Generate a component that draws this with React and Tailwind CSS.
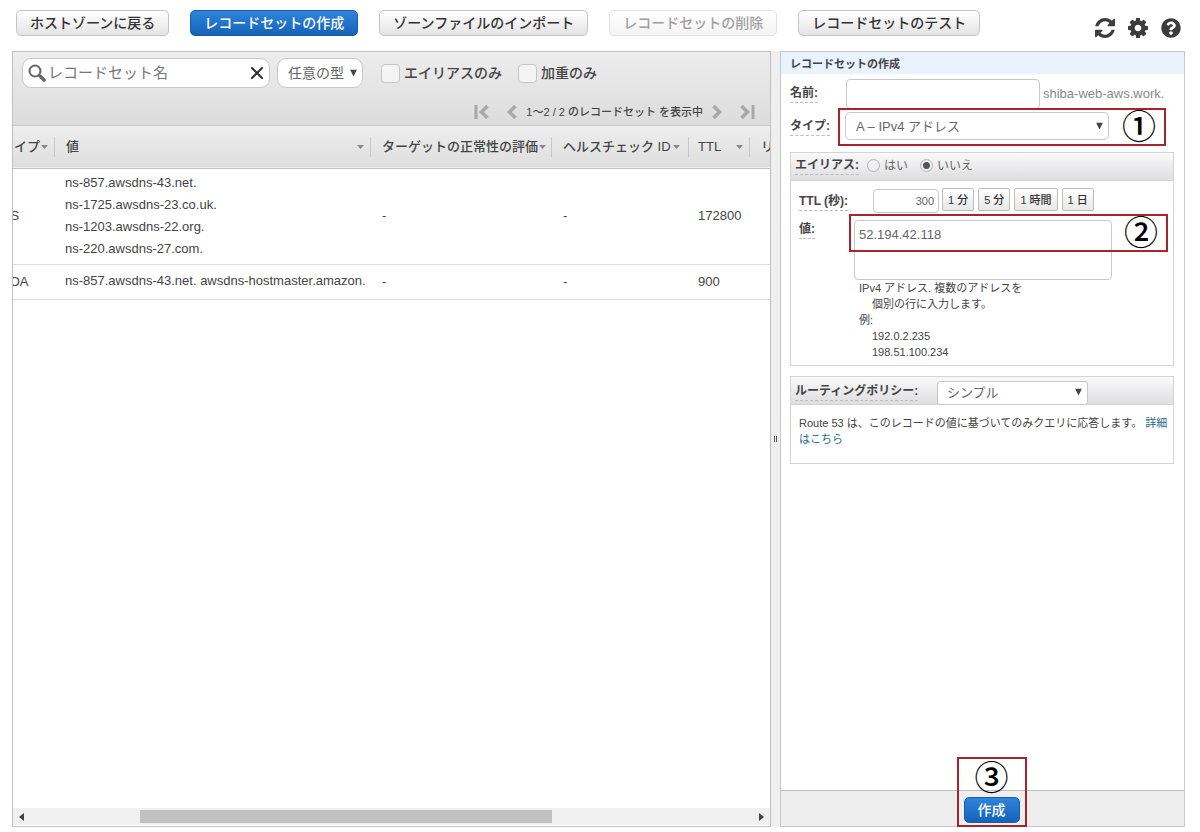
import { useState } from 'react';
import { X } from 'lucide-react';
import { FaQuestionCircle } from 'react-icons/fa';

const COLUMNS = [
  { label: 'タイプ',                   width: 'w-[62px]',  pad: 'pl-2 pr-[6px]' },
  { label: '値',                       width: '',          pad: 'pl-[11px] pr-[6px]' },
  { label: 'ターゲットの正常性の評価', width: 'w-[181px]', pad: 'pl-[11px] pr-[5px]' },
  { label: 'ヘルスチェック ID',        width: 'w-[137px]', pad: 'pl-[11px] pr-2' },
  { label: 'TTL',                      width: 'w-[61px]',  pad: 'pl-[9px] pr-[6px]' },
  { label: 'リージョン',               width: 'w-[100px]', pad: 'pl-[11px]' },
];

const RECORDS = [
  {
    type: 'NS',
    values: ['ns-857.awsdns-43.net.', 'ns-1725.awsdns-23.co.uk.', 'ns-1203.awsdns-22.org.', 'ns-220.awsdns-27.com.'],
    ttl: '172800',
  },
  { type: 'SOA', values: ['ns-857.awsdns-43.net. awsdns-hostmaster.amazon.'], ttl: '900' },
];

const TTL_PRESETS = [
  { label: '1 分',   seconds: '60' },
  { label: '5 分',   seconds: '300' },
  { label: '1 時間', seconds: '3600' },
  { label: '1 日',   seconds: '86400' },
];

const BUTTON_STYLES = {
  plain:    'border-[#c4c4c4] bg-linear-to-b from-white to-[#e4e4e4] text-[#333]',
  primary:  'border-[#1a5ca8] bg-linear-to-b from-[#2f84dc] to-[#1463b8] text-white font-bold',
  disabled: 'border-[#e2e2e2] bg-linear-to-b from-white to-[#f4f4f4] text-[#a0a0a0]',
};

function Button({ variant = 'plain', children, ...rest }) {
  return (
    <button disabled={variant === 'disabled'} className={`h-[26px] px-[13px] rounded-[5px] border text-[14px] leading-[22px] font-medium whitespace-nowrap ${BUTTON_STYLES[variant]}`} {...rest}>
      {children}
    </button>
  );
}

function RefreshIcon() {
  return (
    <svg viewBox="0 128 1536 1536" className="w-5 h-5" fill="currentColor">
      <path d="M1511 1056q0 5-1 7-64 268-268 434.500t-478 166.500q-146 0-282.500-55t-243.500-157l-129 129q-19 19-45 19t-45-19-19-45v-448q0-26 19-45t45-19h448q26 0 45 19t19 45-19 45l-137 137q71 66 161 102t187 36q134 0 250-65t186-179q11-17 53-117 8-23 30-23h192q13 0 22.500 9.500t9.500 22.500zm25-800v448q0 26-19 45t-45 19h-448q-26 0-45-19t-19-45 19-45l138-138q-148-137-349-137-134 0-250 65t-186 179q-11 17-53 117-8 23-30 23h-199q-13 0-22.500-9.500t-9.500-22.500v-7q65-268 270-434.500t480-166.500q146 0 284 55.500t245 156.500l130-129q19-19 45-19t45 19 19 45z" />
    </svg>
  );
}

function GearIcon() {
  return (
    <svg viewBox="0 128 1536 1536" className="w-5 h-5" fill="currentColor">
      <path d="M1024 896q0-106-75-181t-181-75-181 75-75 181 75 181 181 75 181-75 75-181zm512-109v222q0 12-8 23t-20 13l-185 28q-19 54-39 91 35 50 107 138 10 12 10 25t-9 23q-27 37-99 108t-94 71q-12 0-26-9l-138-108q-44 23-91 38-16 136-29 186-7 28-36 28h-222q-14 0-24.500-8.500t-11.500-21.500l-28-184q-49-16-90-37l-141 107q-10 9-25 9-14 0-25-11-126-114-165-168-7-10-7-23 0-12 8-23 15-21 51-66.500t54-70.500q-27-50-41-99l-183-27q-13-2-21-12.500t-8-23.500v-222q0-12 8-23t19-13l186-28q14-46 39-92-40-57-107-138-10-12-10-24 0-10 9-23 26-36 98.500-107.500t94.500-71.500q13 0 26 10l138 107q44-23 91-38 16-136 29-186 7-28 36-28h222q14 0 24.500 8.500t11.500 21.500l28 184q49 16 90 37l142-107q9-9 24-9 13 0 25 10 129 119 165 170 7 8 7 22 0 12-8 23-15 21-51 66.500t-54 70.500q26 50 41 98l183 28q13 2 21 12.500t8 23.500z" />
    </svg>
  );
}

function SearchIcon() {
  return (
    <svg viewBox="0 0 18 18" className="w-[18px] h-[18px] shrink-0" fill="none" stroke="#666" strokeLinecap="round">
      <circle cx="7" cy="7" r="5.500" strokeWidth="2" />
      <path d="M12 12l4 4" strokeWidth="3.500" />
    </svg>
  );
}

function Chevron({ flip, bar }) {
  return (
    <svg viewBox="0 0 16 14" className={`w-4 h-[14px] ${flip ? '-scale-x-100' : ''}`} fill="none" stroke="#a8a8a8">
      {bar && <path d="M2 0V14" strokeWidth="3" />}
      <path d="M13.500 1 7.500 7l6 6" strokeWidth="3.500" />
    </svg>
  );
}

function SelectBox({ className, textClass, children, ...rest }) {
  return (
    <div className={`relative ${className}`}>
      <select className={`w-full h-full appearance-none border border-[#c8c8c8] bg-white text-[#666] ${textClass}`} {...rest}>
        {children}
      </select>
      <svg viewBox="0 0 7 7" className="absolute right-[6px] top-1/2 -translate-y-1/2 w-[7px] h-[7px] pointer-events-none" fill="#444">
        <path d="M0 0H7L3.500 7Z" />
      </svg>
    </div>
  );
}

function FieldLabel({ children, ...rest }) {
  return (
    <label className="border-b border-dashed border-[#bbb] text-[12px] leading-[17px] font-bold text-[#444] whitespace-nowrap" {...rest}>
      {children}
    </label>
  );
}

// Numbered red frame laid over the control that a step is about
function Step({ number, className }) {
  return (
    <div className={`absolute z-10 flex border-2 border-[#a8242a] pointer-events-none ${className}`}>
      <span className="text-[34px] leading-[34px] font-medium text-black">{number}</span>
    </div>
  );
}

function RecordTable() {
  return (
    <div className="overflow-hidden">
      <table className="-ml-5 w-[calc(100%+100px)] table-fixed border-collapse text-[13px] text-[#444]">
        <thead>
          <tr className="h-[42px] bg-linear-to-b from-[#eeeeee] to-[#dedede] border-b border-[#c4c4c4]">
            {COLUMNS.map(c => (
              <th key={c.label} className={`${c.width} p-0 text-left font-medium leading-[20px]`}>
                <div className={`flex items-center justify-between h-5 border-r border-[#c8c8c8] whitespace-nowrap ${c.pad}`}>
                  {c.label}
                  <svg viewBox="0 0 7 4" className="w-[7px] h-1 shrink-0" fill="#8a8a8a"><path d="M0 0H7L3.500 4Z" /></svg>
                </div>
              </th>
            ))}
          </tr>
        </thead>
        <tbody>
          {RECORDS.map(r => (
            <tr key={r.type} className="h-[35px] border-b border-[#dcdcdc] leading-[22px]">
              <td className="pl-2">{r.type}</td>
              <td className="pl-[10px] pt-[3px] pb-1 whitespace-nowrap">
                {r.values.map(v => <div key={v}>{v}</div>)}
              </td>
              <td className="pl-[11px]">-</td>
              <td className="pl-[11px]">-</td>
              <td className="pl-[9px]">{r.ttl}</td>
              <td />
            </tr>
          ))}
        </tbody>
      </table>
    </div>
  );
}

function RecordList() {
  const [query, setQuery] = useState('');

  return (
    <section className="flex-1 min-w-0 flex flex-col border border-[#c0c0c0]">
      <div className="h-[74px] shrink-0 bg-linear-to-b from-[#ededed] to-[#dcdcdc] border-b border-[#cacaca] pt-[6px]">
        <div className="flex items-center pl-[9px]">
          <div className="flex items-center w-[248px] h-[30px] pl-[5px] pr-[2px] rounded-[9px] border border-[#c8c8c8] bg-white">
            <SearchIcon />
            <input value={query} onChange={e => setQuery(e.target.value)} aria-label="レコードセット名" placeholder="レコードセット名"
              className="flex-1 min-w-0 pl-[2px] text-[15px] leading-[22px] text-[#555] placeholder:text-[#777] focus:outline-none" />
            <button onClick={() => setQuery('')} aria-label="クリア" className="shrink-0"><X className="w-5 h-5 text-[#333]" strokeWidth={2.5} /></button>
          </div>
          <SelectBox className="ml-[7px] w-[86px] h-[30px]" textClass="pl-[10px] rounded-[9px] text-[14px]" aria-label="型">
            <option>任意の型</option>
          </SelectBox>
          <input id="alias-only" type="checkbox" className="ml-[18px] w-[19px] h-[19px] appearance-none rounded-[4px] border border-[#c6c6c6] bg-[#f4f4f4] checked:bg-[#2f84dc]" />
          <label htmlFor="alias-only" className="ml-1 text-[14px] leading-[20px] font-medium text-[#444]">エイリアスのみ</label>
          <input id="weighted-only" type="checkbox" className="ml-4 w-[19px] h-[19px] appearance-none rounded-[4px] border border-[#c6c6c6] bg-[#f4f4f4] checked:bg-[#2f84dc]" />
          <label htmlFor="weighted-only" className="ml-1 text-[14px] leading-[20px] font-medium text-[#444]">加重のみ</label>
        </div>
        <div className="flex items-center justify-end h-5 mt-[14px] pr-[15px] text-[#444]">
          <button aria-label="最初"><Chevron bar /></button>
          <button aria-label="前へ" className="ml-3"><Chevron /></button>
          <span className="ml-2 mr-1 text-[11px] leading-[16px] font-medium whitespace-nowrap">1～2 / 2 のレコードセット を表示中</span>
          <button aria-label="次へ" className="ml-1"><Chevron flip /></button>
          <button aria-label="最後" className="ml-3"><Chevron flip bar /></button>
        </div>
      </div>

      <RecordTable />

      <div className="mt-auto flex items-center h-[17px] mb-px px-[6px] bg-[#f0f0f0]">
        <svg viewBox="0 0 5 8" className="w-[5px] h-2" fill="#404040"><path d="M5 0V8L0 4Z" /></svg>
        <div className="flex-1 mx-1 pl-[15%]">
          <div className="w-[67%] h-[13px] bg-[#c1c1c1]" />
        </div>
        <svg viewBox="0 0 5 8" className="w-[5px] h-2" fill="#404040"><path d="M0 0V8L5 4Z" /></svg>
      </div>
    </section>
  );
}

function CreateForm() {
  const [name, setName] = useState('');
  const [alias, setAlias] = useState('no');
  const [ttl, setTtl] = useState('300');
  const [value, setValue] = useState('52.194.42.118');

  const radio = 'w-[13px] h-[13px] appearance-none rounded-full border border-[#b4b4b4] bg-[#f0f0f0] checked:bg-[radial-gradient(circle,#555_3px,#f0f0f0_4px)]';

  return (
    <section className="w-[405px] shrink-0 flex flex-col border border-[#c8c8c8] text-[#444]">
      <h2 className="h-[22px] pl-[9px] bg-[#e9f2fd] text-[11px] leading-[24px] font-bold">レコードセットの作成</h2>

      <div className="pl-[9px] pr-[10px]">
        <div className="flex items-start h-[34px] pt-[5px]">
          <div className="w-[56px] pt-[6px] flex"><FieldLabel htmlFor="name">名前:</FieldLabel></div>
          <input id="name" value={name} onChange={e => setName(e.target.value)}
            className="w-[194px] h-[30px] px-2 rounded-[4px] border border-[#c8c8c8] text-[13px]" />
          <span className="ml-[3px] text-[13px] leading-[30px] text-[#888]">shiba-web-aws.work.</span>
        </div>
        <div className="relative flex items-start h-[44px] pt-1">
          <div className="w-[55px] pt-[6px] flex"><FieldLabel htmlFor="type">タイプ:</FieldLabel></div>
          <SelectBox id="type" className="w-[264px] h-[28px]" textClass="pl-[10px] pt-[2px] rounded-[5px] text-[13px]">
            <option>A – IPv4 アドレス</option>
          </SelectBox>
          <Step number="①" className="left-[48px] top-0 w-[328px] h-[38px] justify-end pr-2" />
        </div>

        <div className="border border-[#d4d4d4] h-[214px]">
          <div className="flex items-center h-[28px] pl-1 pb-[2px] bg-linear-to-b from-[#fafafa] to-[#dedee0] border-b border-[#d4d4d4] text-[12px]">
            <FieldLabel htmlFor="alias-no">エイリアス:</FieldLabel>
            <input id="alias-yes" name="alias" type="radio" checked={alias === 'yes'} onChange={() => setAlias('yes')} className={`ml-2 ${radio}`} />
            <label htmlFor="alias-yes" className="ml-1 leading-[20px] text-[#666]">はい</label>
            <input id="alias-no" name="alias" type="radio" checked={alias === 'no'} onChange={() => setAlias('no')} className={`ml-3 ${radio}`} />
            <label htmlFor="alias-no" className="ml-1 leading-[20px] text-[#666]">いいえ</label>
          </div>

          <div className="flex items-start pt-[7px] pl-2">
            <div className="w-[74px] pt-[5px] flex"><FieldLabel htmlFor="ttl">TTL (秒):</FieldLabel></div>
            <input id="ttl" value={ttl} onChange={e => setTtl(e.target.value)}
              className="w-[66px] h-6 mt-px pr-1 rounded-[4px] border border-[#c8c8c8] text-right text-[11px] text-[#666]" />
            <div className="ml-[3px] flex gap-1">
              {TTL_PRESETS.map(p => (
                <button key={p.label} onClick={() => setTtl(p.seconds)}
                  className="h-[23px] px-[5px] rounded-[2px] border border-[#bdbdbd] bg-linear-to-b from-white to-[#e8e8e8] text-[11px] leading-[20px] font-medium text-[#333] whitespace-nowrap">
                  {p.label}
                </button>
              ))}
            </div>
          </div>

          <div className="relative flex items-start mt-px pt-[6px] pl-2">
            <div className="w-[55px] pt-px flex"><FieldLabel htmlFor="value">値:</FieldLabel></div>
            <div>
              <textarea id="value" value={value} onChange={e => setValue(e.target.value)}
                className="block w-[258px] h-[60px] px-1 pt-1 resize-none rounded-[4px] border border-[#c8c8c8] text-[13px] leading-[20px] text-[#666]" />
              <div className="pl-[5px] text-[11px] leading-[16px]">
                <p>IPv4 アドレス. 複数のアドレスを</p>
                <p className="pl-[13px]">個別の行に入力します。</p>
                <p>例:</p>
                <p className="pl-[13px]">192.0.2.235</p>
                <p className="pl-[13px]">198.51.100.234</p>
              </div>
            </div>
            <Step number="②" className="left-[58px] top-0 w-[319px] h-[38px] justify-end pr-2" />
          </div>
        </div>

        <div className="mt-[10px] border border-[#d4d4d4] h-[88px]">
          <div className="flex items-end h-[28px] pl-1 bg-linear-to-b from-[#fafafa] to-[#dedee0] border-b border-[#d4d4d4]">
            <div className="w-[142px] flex pb-[3px]"><FieldLabel htmlFor="policy">ルーティングポリシー:</FieldLabel></div>
            <SelectBox id="policy" className="w-[151px] h-6" textClass="pl-[9px] rounded-[3px] text-[13px]">
              <option>シンプル</option>
            </SelectBox>
          </div>
          <p className="pl-2 pr-1 pt-[10px] text-[11px] leading-[16px]">
            Route 53 は、このレコードの値に基づいてのみクエリに応答します。 <a href="#" className="text-[#1f6a94]">詳細はこちら</a>
          </p>
        </div>
      </div>

      <div className="mt-auto flex justify-center h-[36px] pt-[6px] pl-[18px] bg-[#eeeeee] border-t border-[#c0c0c0]">
        <div className="relative">
          <Button variant="primary">作成</Button>
          <Step number="③" className="-inset-x-[7px] -top-10 h-[70px] justify-center pt-[2px]" />
        </div>
      </div>
    </section>
  );
}

export default function App() {
  return (
    <div className="min-h-screen flex flex-col pl-3 pr-[15px] pb-[5px] bg-white font-['Liberation_Sans','Noto_Sans_CJK_JP',sans-serif]">
      <header className="flex items-start justify-between h-[51px] pt-[10px] pl-1">
        <div className="flex gap-[21px]">
          <Button>ホストゾーンに戻る</Button>
          <Button variant="primary">レコードセットの作成</Button>
          <Button>ゾーンファイルのインポート</Button>
          <Button variant="disabled">レコードセットの削除</Button>
          <Button>レコードセットのテスト</Button>
        </div>
        <div className="flex items-center gap-[13px] pt-2 pr-1 text-[#3c3c3c]">
          <button aria-label="更新"><RefreshIcon /></button>
          <button aria-label="設定"><GearIcon /></button>
          <button aria-label="ヘルプ"><FaQuestionCircle className="w-5 h-5" /></button>
        </div>
      </header>

      <main className="flex-1 flex">
        <RecordList />
        <div className="w-[9px] shrink-0 flex items-center justify-center gap-px bg-[#efefef]">
          <span className="w-px h-[6px] bg-[#555]" />
          <span className="w-px h-[6px] bg-[#555]" />
        </div>
        <CreateForm />
      </main>
    </div>
  );
}
